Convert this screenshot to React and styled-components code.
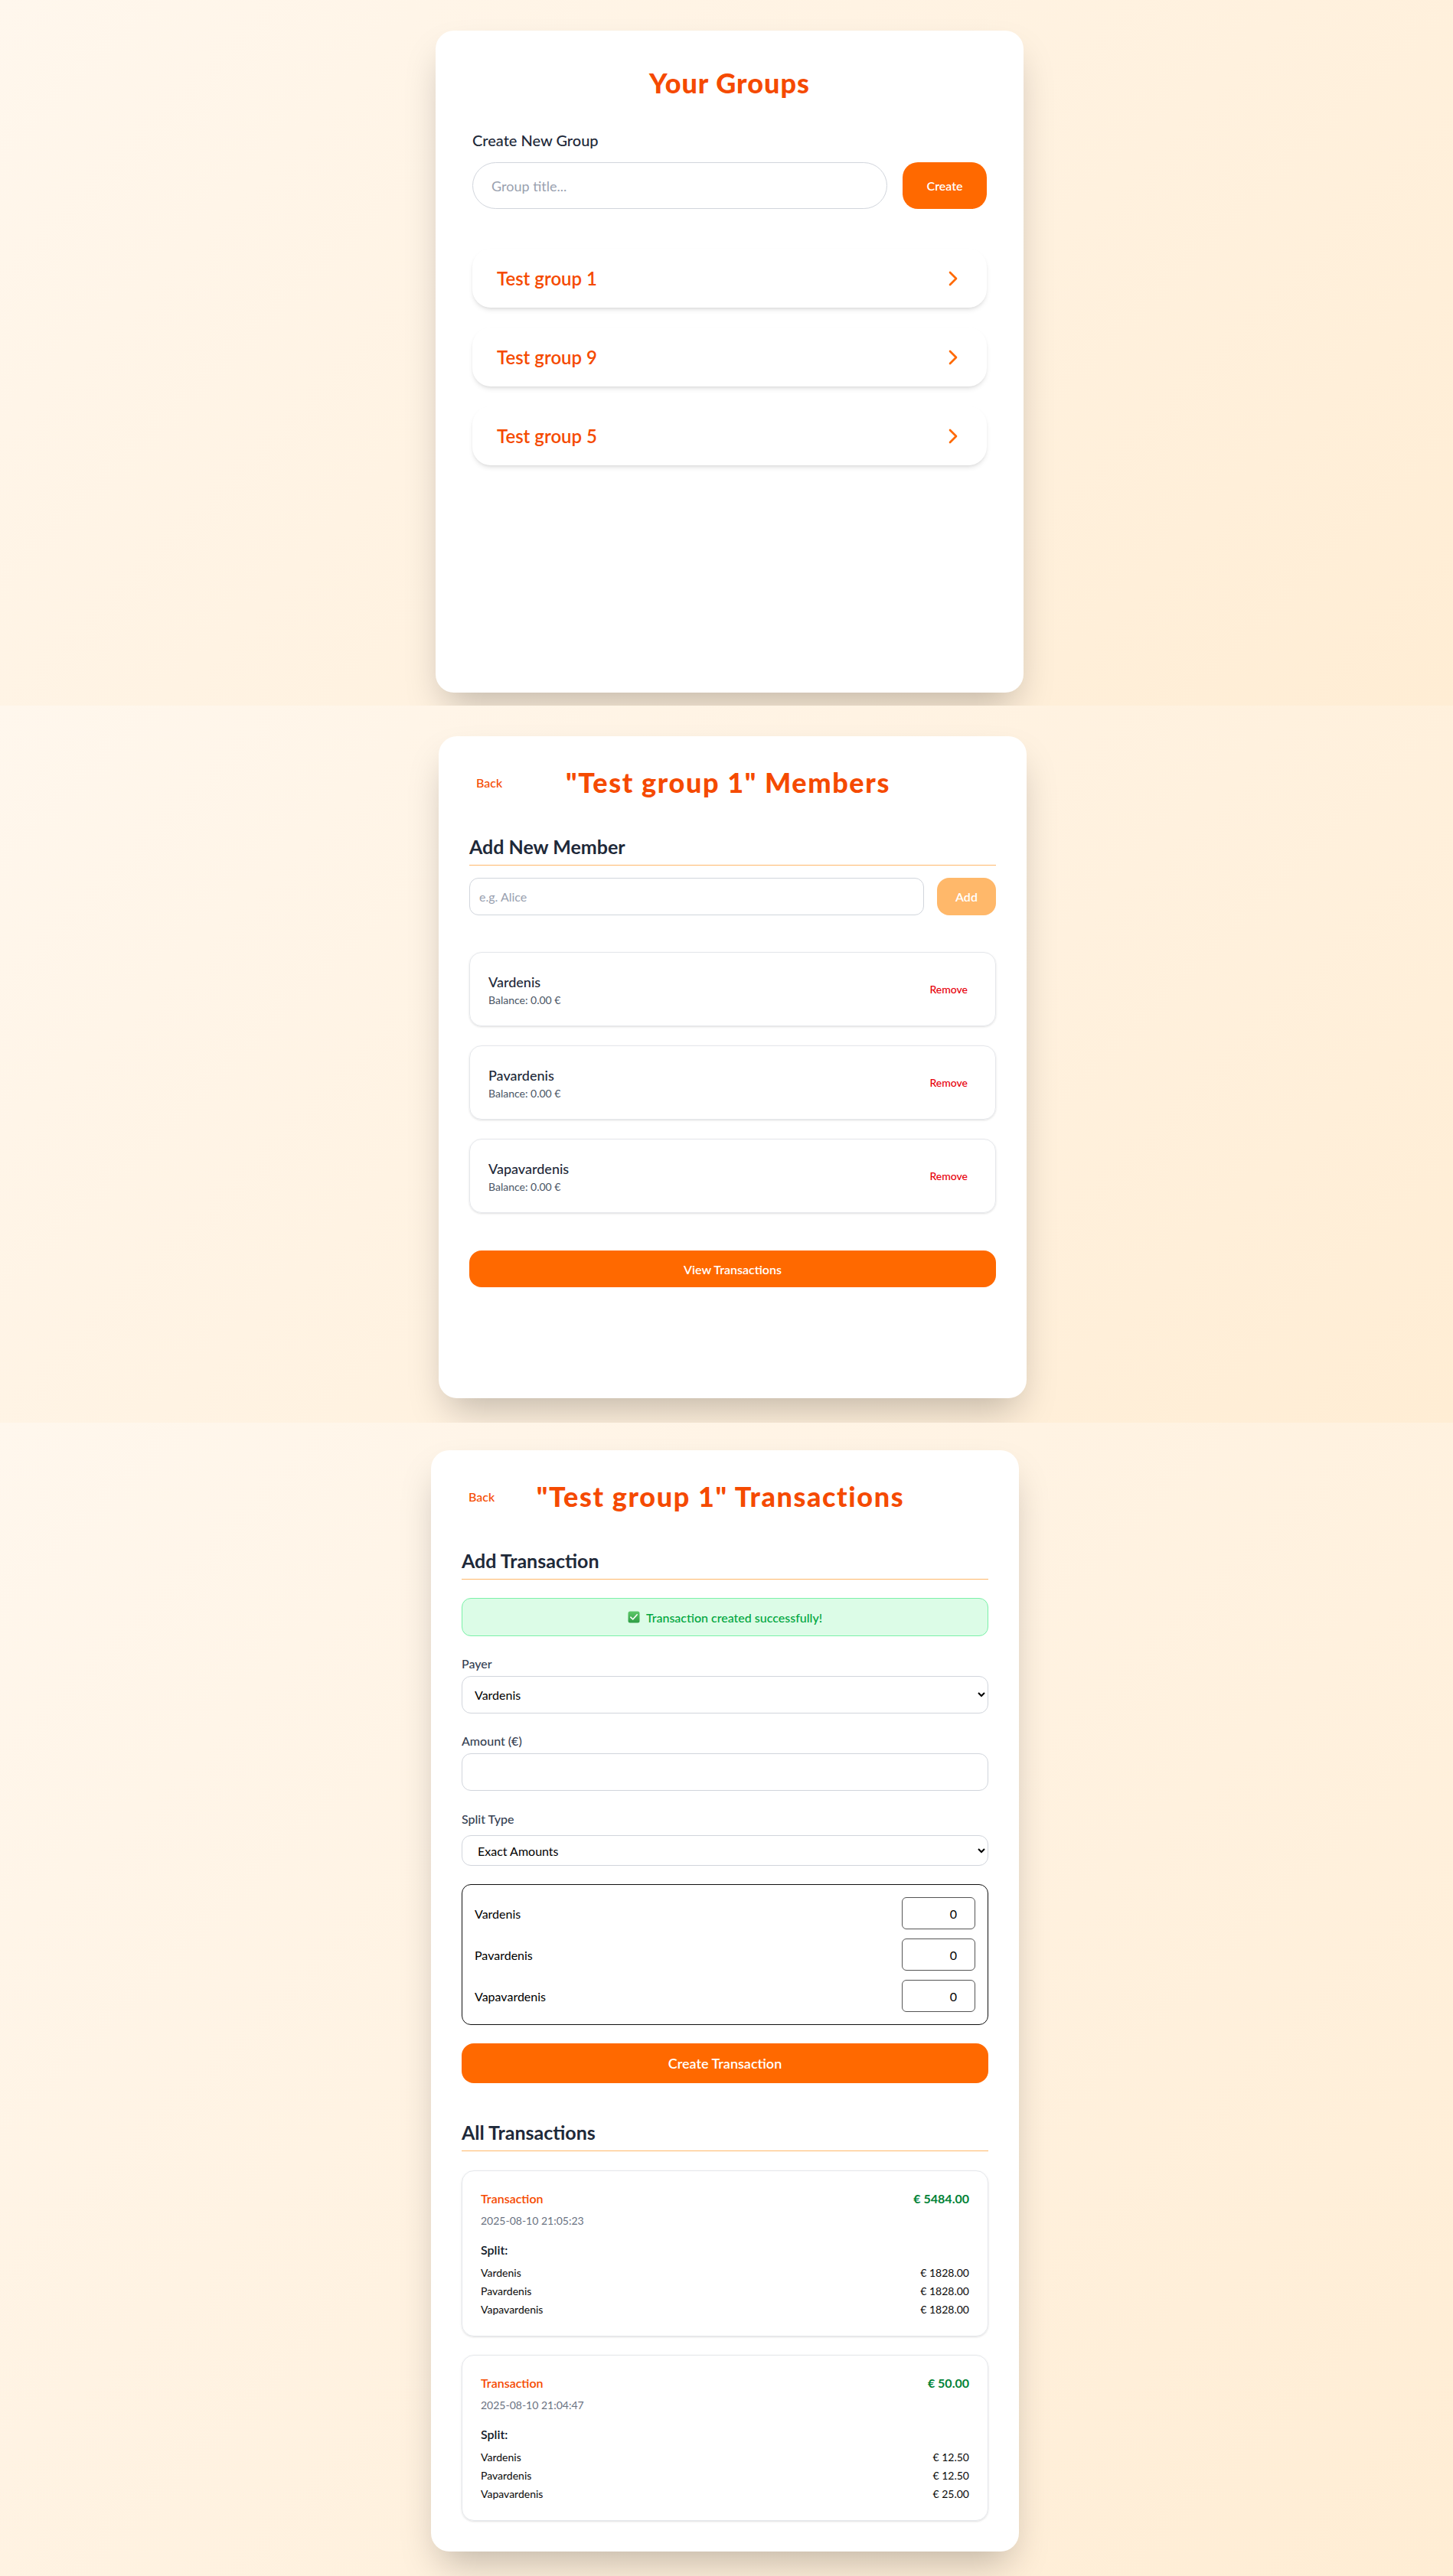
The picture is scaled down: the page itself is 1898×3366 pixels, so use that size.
import React from 'react'
import styled, { createGlobalStyle } from 'styled-components'
import { ChevronRight } from 'lucide-react'

const GlobalStyle = createGlobalStyle`
  html, body {
    margin: 0;
    padding: 0;
  }
  body {
    font-family: Lato, "Open Sans", "Noto Sans", sans-serif;
    color: #1e2939;
  }
  * {
    box-sizing: border-box;
  }
`

// one "screen" of the app, each with its own background
const Screen = styled.section`
  height: ${p => p.$height}px;
  padding-top: ${p => p.$top}px;
  padding-left: ${p => Math.max(p.$shift, 0) * 2}px;
  padding-right: ${p => Math.max(-p.$shift, 0) * 2}px;
  display: flex;
  justify-content: center;
  align-items: flex-start;
  overflow: hidden;
  background: linear-gradient(135deg, #fff7ed 0%, #ffedd4 100%);
`

const Card = styled.div`
  width: 768px;
  flex-shrink: 0;
  min-height: ${p => p.$minHeight || 0}px;
  padding: ${p => p.$pad}px;
  background: #fff;
  border-radius: 24px;
  box-shadow: 0 25px 50px -12px rgba(0, 0, 0, 0.25);
`

const Title = styled.h1`
  flex: 1;
  margin: 0;
  font-size: 36px;
  line-height: 40px;
  font-weight: 900;
  letter-spacing: ${p => p.$spacing ?? 1}px;
  color: #f54a00;
  text-align: center;
  white-space: nowrap;
`

/* ---------- groups ---------- */

const CreateLabel = styled.div`
  margin-top: 41px;
  font-size: 20px;
  line-height: 28px;
  font-weight: 500;
  color: #1e2939;
`

const CreateRow = styled.div`
  margin-top: 15px;
  display: flex;
  gap: 20px;
  height: 61px;
`

const PillInput = styled.input`
  flex: 1;
  min-width: 0;
  height: 100%;
  padding: 0 24px;
  border: 1px solid #d1d5dc;
  border-radius: 999px;
  font-family: inherit;
  font-size: 18px;
  color: #1e2939;
  outline: none;
  &::placeholder {
    color: #99a1af;
  }
`

const CreateButton = styled.button`
  width: 110px;
  border: none;
  border-radius: 20px;
  background: #ff6900;
  color: #fff;
  font-family: inherit;
  font-size: 16px;
  font-weight: 600;
`

const GroupList = styled.div`
  margin-top: 52px;
  display: flex;
  flex-direction: column;
  gap: 26px;
`

const GroupItem = styled.div`
  height: 77px;
  display: flex;
  align-items: center;
  justify-content: space-between;
  padding: 0 28px 0 32px;
  background: #fff;
  border-radius: 24px;
  box-shadow: 0 4px 6px -1px rgba(0, 0, 0, 0.1), 0 2px 4px -2px rgba(0, 0, 0, 0.1);
  color: #f54a00;
  font-size: 24px;
  font-weight: 600;
`

/* ---------- shared page header ---------- */

const Header = styled.div`
  display: flex;
  align-items: center;
  height: 40px;
`

const BackButton = styled.button`
  width: 51px;
  flex-shrink: 0;
  padding: 8px 0 8px 9px;
  text-align: left;
  background: none;
  border: none;
  font-family: inherit;
  font-size: 16px;
  font-weight: 500;
  color: #f54a00;
`

const HeaderSpacer = styled.div`
  width: 63px;
  flex-shrink: 0;
`

const SectionHeading = styled.h2`
  margin: 48px 0 0;
  padding-bottom: 8px;
  border-bottom: 1px solid #ffb86a;
  font-size: 25px;
  line-height: 32px;
  font-weight: 700;
  color: #1e2939;
`

/* ---------- members ---------- */

const AddRow = styled.div`
  margin-top: 16px;
  display: flex;
  gap: 17px;
  height: 49px;
`

const TextInput = styled.input`
  flex: 1;
  min-width: 0;
  height: 100%;
  padding: 0 12px;
  border: 1px solid #d1d5dc;
  border-radius: 12px;
  font-family: inherit;
  font-size: 16px;
  color: #1e2939;
  outline: none;
  &::placeholder {
    color: #99a1af;
  }
`

const AddButton = styled.button`
  width: 77px;
  border: none;
  border-radius: 16px;
  background: #ffb86a;
  color: #fff;
  font-family: inherit;
  font-size: 16px;
  font-weight: 600;
`

const CardList = styled.div`
  margin-top: ${p => p.$mt}px;
  display: flex;
  flex-direction: column;
  gap: ${p => p.$gap}px;
`

const MemberCard = styled.div`
  height: 97px;
  display: flex;
  align-items: center;
  justify-content: space-between;
  padding: 0 24px;
  border: 1px solid #e5e7eb;
  border-radius: 16px;
  box-shadow: 0 1px 3px rgba(0, 0, 0, 0.1), 0 1px 2px -1px rgba(0, 0, 0, 0.1);
`

const MemberName = styled.div`
  font-size: 18px;
  line-height: 28px;
  font-weight: 500;
  color: #1e2939;
`

const Balance = styled.div`
  font-size: 14px;
  line-height: 20px;
  color: #4a5565;
`

const RemoveButton = styled.button`
  padding: 4px 12px;
  background: none;
  border: none;
  font-family: inherit;
  font-size: 14px;
  line-height: 20px;
  font-weight: 500;
  color: #e7000b;
`

const WideButton = styled.button`
  display: block;
  width: 100%;
  margin-top: ${p => p.$mt}px;
  height: ${p => p.$h}px;
  border: none;
  border-radius: 16px;
  background: #ff6900;
  color: #fff;
  font-family: inherit;
  font-size: ${p => p.$size}px;
  font-weight: 600;
`

/* ---------- transactions ---------- */

const Notice = styled.div`
  margin-top: 24px;
  height: 50px;
  display: flex;
  align-items: center;
  justify-content: center;
  gap: 8px;
  background: #dcfce7;
  border: 1px solid #7bf1a8;
  border-radius: 12px;
  color: #00a63e;
  font-size: 16px;
  font-weight: 500;
`

const Field = styled.div`
  margin-top: ${p => p.$mt}px;
`

const Label = styled.label`
  display: block;
  font-size: 16px;
  line-height: 24px;
  font-weight: 500;
  color: #364153;
`

const Select = styled.select`
  display: block;
  width: 100%;
  margin-top: ${p => p.$gap}px;
  height: ${p => p.$h}px;
  padding: 0 ${p => p.$px}px;
  border: 1px solid #d1d5dc;
  border-radius: 12px;
  background: #fff;
  font-family: inherit;
  font-size: 16px;
  color: #000;
`

const AmountInput = styled.input`
  display: block;
  width: 100%;
  margin-top: 4px;
  height: 49px;
  padding: 0 12px;
  border: 1px solid #d1d5dc;
  border-radius: 12px;
  font-family: inherit;
  font-size: 16px;
  outline: none;
`

const SplitBox = styled.div`
  margin-top: 24px;
  padding: 16px;
  border: 1px solid #111;
  border-radius: 12px;
  display: flex;
  flex-direction: column;
  gap: 12px;
`

const SplitRow = styled.div`
  height: 42px;
  display: flex;
  align-items: center;
  justify-content: space-between;
  font-size: 16px;
  color: #000;
`

const SplitInput = styled.input`
  width: 96px;
  height: 42px;
  padding: 0 23px 0 8px;
  border: 1px solid #555;
  border-radius: 6px;
  text-align: right;
  font-family: inherit;
  font-size: 16px;
  color: #000;
  outline: none;
`

const TxCard = styled.div`
  padding: 24px;
  border: 1px solid #e5e7eb;
  border-radius: 16px;
  box-shadow: 0 1px 3px rgba(0, 0, 0, 0.1), 0 1px 2px -1px rgba(0, 0, 0, 0.1);
`

const TxHead = styled.div`
  display: flex;
  justify-content: space-between;
  align-items: baseline;
  font-size: 16px;
  line-height: 24px;
`

const TxTitle = styled.span`
  color: #f54a00;
  font-weight: 600;
`

const TxAmount = styled.span`
  color: #008236;
  font-weight: 700;
`

const TxDate = styled.div`
  margin-top: 7px;
  font-size: 14px;
  line-height: 20px;
  color: #6a7282;
`

const SplitTitle = styled.div`
  margin-top: 16px;
  font-size: 16px;
  line-height: 24px;
  font-weight: 600;
  color: #101828;
`

const ShareList = styled.div`
  margin-top: 8px;
  display: flex;
  flex-direction: column;
  gap: 4px;
`

const ShareRow = styled.div`
  display: flex;
  justify-content: space-between;
  font-size: 14px;
  line-height: 20px;
  color: #0a0a0a;
`

const members = ['Vardenis', 'Pavardenis', 'Vapavardenis']

const transactions = [
  {
    id: 2,
    amount: '5484.00',
    date: '2025-08-10 21:05:23',
    split: ['1828.00', '1828.00', '1828.00'],
  },
  {
    id: 1,
    amount: '50.00',
    date: '2025-08-10 21:04:47',
    split: ['12.50', '12.50', '25.00'],
  },
]

function CheckEmoji() {
  return (
    <svg width="16" height="16" viewBox="0 0 16 16">
      <defs>
        <linearGradient id="ok" x1="0" y1="0" x2="0" y2="1">
          <stop offset="0" stopColor="#5fc86a" />
          <stop offset="1" stopColor="#2e9e45" />
        </linearGradient>
      </defs>
      <rect x="0.5" y="0.5" width="15" height="15" rx="2.5" fill="url(#ok)" />
      <path d="M3.8 8.2 6.7 11 12.2 4.8" fill="none" stroke="#fff" strokeWidth="1.6" strokeLinecap="round" strokeLinejoin="round" />
    </svg>
  )
}

function GroupsScreen() {
  const groups = ['Test group 1', 'Test group 9', 'Test group 5']
  return (
    <Screen $height={922} $top={40} $shift={4}>
      <Card $pad={48} $minHeight={865}>
        <Title>Your Groups</Title>
        <CreateLabel>Create New Group</CreateLabel>
        <CreateRow>
          <PillInput placeholder="Group title..." />
          <CreateButton>Create</CreateButton>
        </CreateRow>
        <GroupList>
          {groups.map((g) => (
            <GroupItem key={g}>
              {g}
              <ChevronRight size={32} color="#ff6900" strokeWidth={2} />
            </GroupItem>
          ))}
        </GroupList>
      </Card>
    </Screen>
  )
}

function MembersScreen() {
  return (
    <Screen $height={937} $top={40} $shift={8}>
      <Card $pad={40} $minHeight={865}>
        <Header>
          <BackButton>Back</BackButton>
          <Title $spacing={1.6}>"Test group 1" Members</Title>
          <HeaderSpacer />
        </Header>
        <SectionHeading>Add New Member</SectionHeading>
        <AddRow>
          <TextInput placeholder="e.g. Alice" />
          <AddButton>Add</AddButton>
        </AddRow>
        <CardList $mt={48} $gap={25}>
          {members.map((m) => (
            <MemberCard key={m}>
              <div>
                <MemberName>{m}</MemberName>
                <Balance>Balance: 0.00 €</Balance>
              </div>
              <RemoveButton>Remove</RemoveButton>
            </MemberCard>
          ))}
        </CardList>
        <WideButton $mt={49} $h={48} $size={16}>View Transactions</WideButton>
      </Card>
    </Screen>
  )
}

function TransactionsScreen() {
  return (
    <Screen $height={1507} $top={36} $shift={-2}>
      <Card $pad={40}>
        <Header>
          <BackButton>Back</BackButton>
          <Title $spacing={1.6}>"Test group 1" Transactions</Title>
          <HeaderSpacer />
        </Header>
        <SectionHeading>Add Transaction</SectionHeading>
        <Notice>
          <CheckEmoji />
          Transaction created successfully!
        </Notice>
        <Field $mt={24}>
          <Label>Payer</Label>
          <Select $gap={4} $h={49} $px={12} defaultValue="Vardenis">
            {members.map((m) => (
              <option key={m}>{m}</option>
            ))}
          </Select>
        </Field>
        <Field $mt={24}>
          <Label>Amount (€)</Label>
          <AmountInput />
        </Field>
        <Field $mt={25}>
          <Label>Split Type</Label>
          <Select $gap={9} $h={40} $px={16} defaultValue="exact">
            <option value="equal">Equal</option>
            <option value="exact">Exact Amounts</option>
            <option value="percent">Percentages</option>
          </Select>
        </Field>
        <SplitBox>
          {members.map((m) => (
            <SplitRow key={m}>
              {m}
              <SplitInput defaultValue="0" />
            </SplitRow>
          ))}
        </SplitBox>
        <WideButton $mt={24} $h={52} $size={18}>Create Transaction</WideButton>

        <SectionHeading>All Transactions</SectionHeading>
        <CardList $mt={25} $gap={24}>
          {transactions.map((t) => (
            <TxCard key={t.id}>
              <TxHead>
                <TxTitle>Transaction</TxTitle>
                <TxAmount>€ {t.amount}</TxAmount>
              </TxHead>
              <TxDate>{t.date}</TxDate>
              <SplitTitle>Split:</SplitTitle>
              <ShareList>
                {members.map((m, i) => (
                  <ShareRow key={m}>
                    <span>{m}</span>
                    <span>€ {t.split[i]}</span>
                  </ShareRow>
                ))}
              </ShareList>
            </TxCard>
          ))}
        </CardList>
      </Card>
    </Screen>
  )
}

export default function App() {
  return (
    <>
      <GlobalStyle />
      <GroupsScreen />
      <MembersScreen />
      <TransactionsScreen />
    </>
  )
}
